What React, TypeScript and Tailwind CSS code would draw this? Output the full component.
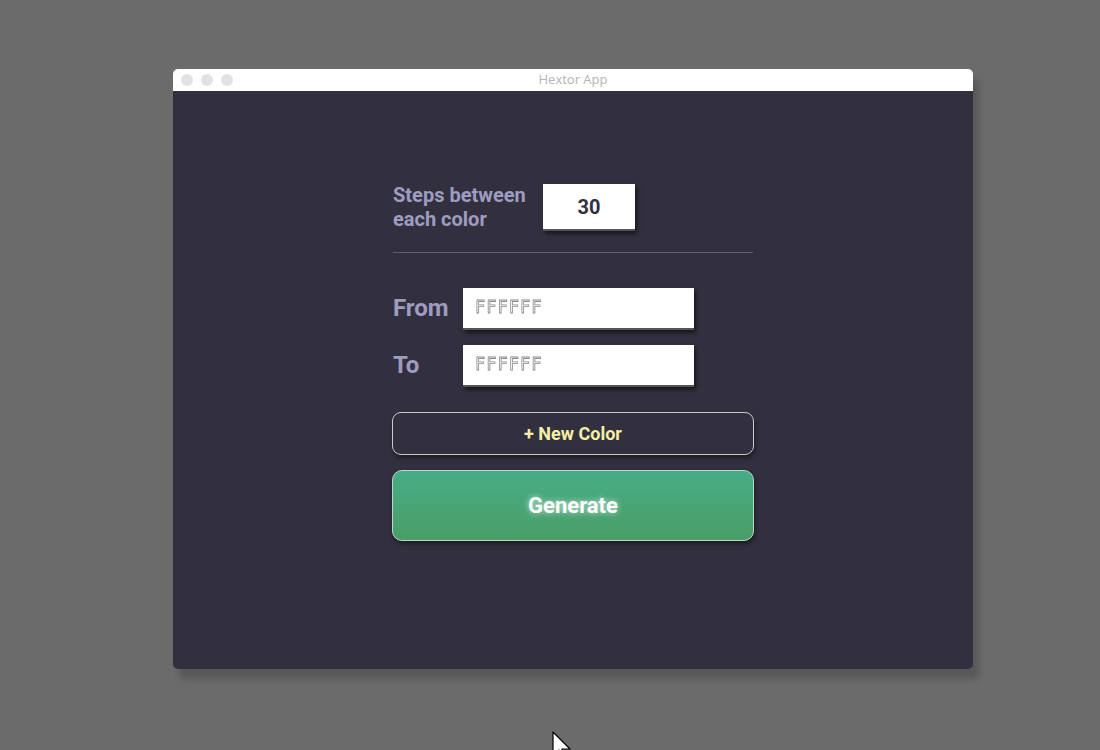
import React from 'react';

const font = { fontFamily: 'Roboto, "Liberation Sans", sans-serif' };

const HexInput: React.FC<{ value: string }> = ({ value }) => (
  <div className="w-[231px] h-[42px] bg-white flex items-center pl-[12px] shadow-[2px_3px_4px_rgba(0,0,0,0.55)] border-b-2 border-[#555]">
    <span className="opacity-[0.99] will-change-transform text-[17px] tracking-[1px] text-white [-webkit-text-stroke:0.8px_#8a8a8a]" style={{ fontFamily: '"DejaVu Sans Mono", monospace' }}>
      {value}
    </span>
  </div>
);

const App: React.FC = () => {
  return (
    <div className="relative w-[1100px] h-[750px] bg-[#6b6b6b] overflow-hidden pt-[69px] pl-[173px]" style={font}>
      <div className="w-[800px] h-[600px] rounded-[5px] overflow-hidden flex flex-col shadow-[6px_10px_6px_rgba(0,0,0,0.18)]">
        {/* title bar */}
        <div className="relative h-[22px] bg-white flex items-center px-[8px] gap-[8px] shrink-0">
          <span className="w-[12px] h-[12px] rounded-full bg-[#e2e2e2]" />
          <span className="w-[12px] h-[12px] rounded-full bg-[#e2e2e2]" />
          <span className="w-[12px] h-[12px] rounded-full bg-[#e2e2e2]" />
          <span className="absolute inset-0 flex items-center justify-center text-[13px] text-[#b4b4b4]" style={{ fontFamily: '"Open Sans", "Liberation Sans", sans-serif' }}>
            Hextor App
          </span>
        </div>

        {/* content */}
        <div className="flex-1 bg-[#32303f] pt-[93px] pl-[220px]">
          <div className="w-[362px] flex flex-col">
            <div className="flex items-center">
              <div className="w-[150px] text-[20px] leading-[24px] font-bold text-[#9e9cc0] -mt-px">
                Steps between
                <br />
                each color
              </div>
              <div className="w-[92px] h-[47px] bg-white flex items-center justify-center text-[20px] font-bold text-[#32303f] shadow-[2px_3px_4px_rgba(0,0,0,0.55)] border-b-2 border-[#555]">
                30
              </div>
            </div>

            <div className="mt-[21px] h-px w-[360px] bg-[#5e5c78]" />

            <div className="mt-[35px] flex items-center">
              <div className="w-[70px] text-[24px] font-bold text-[#9e9cc0] -mt-[3px]">From</div>
              <HexInput value="FFFFFF" />
            </div>
            <div className="mt-[15px] flex items-center">
              <div className="w-[70px] text-[24px] font-bold text-[#9e9cc0] -mt-[3px]">To</div>
              <HexInput value="FFFFFF" />
            </div>

            <button className="mt-[25px] -ml-px h-[43px] w-[362px] rounded-[9px] border border-[#c9c9d0] bg-[#32303f] text-[18px] font-bold text-[#f4f0a6] shadow-[1px_3px_4px_rgba(0,0,0,0.45)]">
              + New Color
            </button>

            <button className="mt-[15px] -ml-px h-[71px] w-[362px] rounded-[10px] border border-[#b9d8c6] bg-gradient-to-b from-[#46ad86] to-[#4a9e66] text-[22px] font-bold text-white shadow-[1px_3px_4px_rgba(0,0,0,0.45)] [text-shadow:0_0_6px_rgba(255,255,255,0.7)]">
              Generate
            </button>
          </div>
        </div>
      </div>

      {/* mouse pointer */}
      <svg className="absolute left-[551px] top-[730px]" width="20" height="30" viewBox="0 0 20 30">
        <path d="M2 2 L2 26 L8 20 L12 29 L15 28 L11 19 L19 19 Z" fill="white" stroke="black" strokeWidth="1.2" strokeLinejoin="round" />
      </svg>
    </div>
  );
};

export default App;
